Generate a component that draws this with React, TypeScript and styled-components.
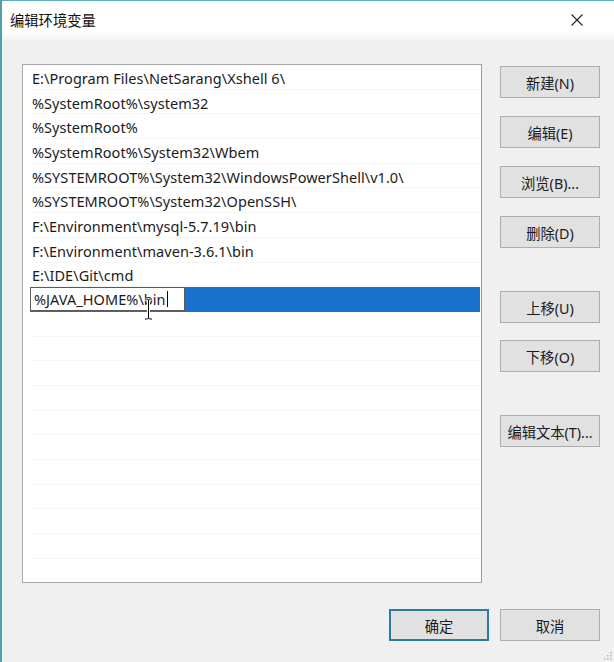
import styled, { createGlobalStyle } from 'styled-components';

const GlobalStyle = createGlobalStyle`
    html, body {
        margin: 0;
        padding: 0;
        background: #f0f0f0;
    }
    * {
        box-sizing: border-box;
    }
`;

const FONT = `"Noto Sans", "Noto Sans CJK SC", sans-serif`;

const Window = styled.div`
    width: 614px;
    height: 662px;
    display: flex;
    flex-direction: column;
    background: #f0f0f0;
    border-top: 1px solid #5cb0b8;
    border-left: 2px solid #4f9fad;
    font-family: ${FONT};
    color: #1b1b1b;
    overflow: hidden;
`;

const TitleBar = styled.div`
    height: 39px;
    flex: none;
    display: flex;
    align-items: center;
    justify-content: space-between;
    padding: 0 31px 2px 8px;
    background: linear-gradient(#ffffff 80%, #f3f3f3);
`;

const Title = styled.span`
    font-size: 14.3px;
    font-family: "Noto Sans CJK SC", sans-serif;
    color: #111;
`;

const Body = styled.div`
    flex: 1;
    display: flex;
    flex-direction: column;
    padding: 24px 14px 20px 20px;
`;

const MainRow = styled.div`
    display: flex;
    gap: 18px;
    height: 519px;
`;

const List = styled.div`
    width: 460px;
    height: 100%;
    background: #fff;
    border: 1px solid #a8a8a8;
    border-right-color: #9a9a9a;
    overflow: hidden;
    display: flex;
    flex-direction: column;
`;

const Row = styled.div<{ $selected?: boolean }>`
    position: relative;
    height: 24.7px;
    flex: none;
    margin: 0 1px 0 7px;
    padding: 2px 0 0 2px;
    display: flex;
    align-items: center;
    font-size: 14.5px;
    letter-spacing: 0.05px;
    white-space: nowrap;
    border-bottom: 1px solid ${(p) => (p.$selected ? 'transparent' : '#f6f6f6')};
    background: ${(p) => (p.$selected ? '#1872cc' : 'transparent')};
`;

const EditBox = styled.div`
    width: 155px;
    height: 24px;
    margin: -2px 0 0 -2px;
    background: #fff;
    border: 1px solid #5a5a5a;
    display: flex;
    align-items: center;
    padding-left: 3px;
    font-size: 14.5px;
`;

const Caret = styled.span`
    display: inline-block;
    width: 1px;
    height: 16px;
    background: #000;
    margin-left: 1px;
`;

const IBeam = styled.svg`
    position: absolute;
    left: 114px;
    top: 11px;
`;

const ButtonColumn = styled.div`
    width: 100px;
    display: flex;
    flex-direction: column;
    padding-top: 2px;
`;

const Button = styled.div<{ $gap?: number; $primary?: boolean }>`
    width: 100px;
    height: 32px;
    flex: none;
    margin-top: ${(p) => p.$gap ?? 0}px;
    display: flex;
    align-items: center;
    justify-content: center;
    background: #e1e1e1;
    border: ${(p) => (p.$primary ? '2px solid #2b7d9c' : '1px solid #adadad')};
    font-size: 14.3px;
    color: #1b1b1b;
`;

const Footer = styled.div`
    display: flex;
    justify-content: flex-end;
    gap: 11px;
    margin-top: 26px;
`;

const Grip = styled.svg`
    position: absolute;
    left: 602px;
    top: 650px;
`;

const paths = [
    'E:\\Program Files\\NetSarang\\Xshell 6\\',
    '%SystemRoot%\\system32',
    '%SystemRoot%',
    '%SystemRoot%\\System32\\Wbem',
    '%SYSTEMROOT%\\System32\\WindowsPowerShell\\v1.0\\',
    '%SYSTEMROOT%\\System32\\OpenSSH\\',
    'F:\\Environment\\mysql-5.7.19\\bin',
    'F:\\Environment\\maven-3.6.1\\bin',
    'E:\\IDE\\Git\\cmd',
];

const sideButtons = [
    { label: '新建(N)', gap: 0 },
    { label: '编辑(E)', gap: 18 },
    { label: '浏览(B)...', gap: 18 },
    { label: '删除(D)', gap: 18 },
    { label: '上移(U)', gap: 43 },
    { label: '下移(O)', gap: 17 },
    { label: '编辑文本(T)...', gap: 43 },
];

export default function App() {
    const emptyRows = Array.from({ length: 12 });

    return (
        <>
            <GlobalStyle />
            <Window>
                <TitleBar>
                    <Title>编辑环境变量</Title>
                    <svg width="12" height="12" viewBox="0 0 12 12">
                        <path d="M0.5 0.5 L11.5 11.5 M11.5 0.5 L0.5 11.5" stroke="#222" strokeWidth="1.1" />
                    </svg>
                </TitleBar>
                <Body>
                    <MainRow>
                        <List>
                            {paths.map((p) => (
                                <Row key={p}>{p}</Row>
                            ))}
                            <Row $selected>
                                <EditBox>
                                    %JAVA_HOME%\bin
                                    <Caret />
                                </EditBox>
                                <IBeam width="9" height="22" viewBox="0 0 9 22">
                                    <path d="M1 1 H3.5 L4.5 2 L5.5 1 H8 M4.5 2 V20 M1 21 H3.5 L4.5 20 L5.5 21 H8" stroke="#fff" strokeWidth="3" fill="none" />
                                    <path d="M1 1 H3.5 L4.5 2 L5.5 1 H8 M4.5 2 V20 M1 21 H3.5 L4.5 20 L5.5 21 H8" stroke="#000" strokeWidth="1" fill="none" />
                                </IBeam>
                            </Row>
                            {emptyRows.map((_, i) => (
                                <Row key={i} />
                            ))}
                        </List>
                        <ButtonColumn>
                            {sideButtons.map((b) => (
                                <Button key={b.label} $gap={b.gap}>
                                    {b.label}
                                </Button>
                            ))}
                        </ButtonColumn>
                    </MainRow>
                    <Footer>
                        <Button $primary>确定</Button>
                        <Button>取消</Button>
                    </Footer>
                </Body>
            </Window>
            <Grip width="10" height="10" viewBox="0 0 10 10">
                <g fill="#b5b5b5">
                    <rect x="8" y="2" width="1.5" height="1.5" />
                    <rect x="5" y="5" width="1.5" height="1.5" />
                    <rect x="8" y="5" width="1.5" height="1.5" />
                    <rect x="2" y="8" width="1.5" height="1.5" />
                    <rect x="5" y="8" width="1.5" height="1.5" />
                    <rect x="8" y="8" width="1.5" height="1.5" />
                </g>
            </Grip>
        </>
    );
}
